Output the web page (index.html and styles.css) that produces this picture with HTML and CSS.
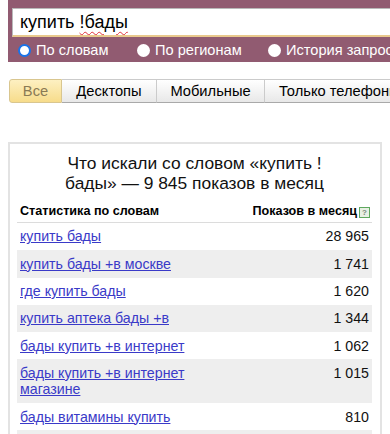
FILE: index.html
```html
<!DOCTYPE html>
<html lang="ru">
<head>
<meta charset="utf-8">
<link rel="stylesheet" href="styles.css">
</head>
<body>
<div class="search">
  <div class="input"><span class="query">купить <span class="typo">!бады</span></span></div>
  <div class="radios">
    <label class="radio"><span class="dot checked"></span>По словам</label>
    <label class="radio"><span class="dot"></span>По регионам</label>
    <label class="radio"><span class="dot"></span>История запросов</label>
  </div>
</div>
<div class="tabs">
  <span class="tab active">Все</span>
  <span class="tab">Десктопы</span>
  <span class="tab">Мобильные</span>
  <span class="tab">Только телефоны</span>
</div>
<div class="card">
  <div class="title">Что искали со словом «купить !<br>бады» — 9 845 показов в месяц</div>
  <table class="stats">
    <thead>
      <tr><th class="kw">Статистика по словам</th><th class="num">Показов в месяц<span class="help">?</span></th></tr>
    </thead>
    <tbody>
      <tr><td class="kw"><a href="#">купить бады</a></td><td class="num">28 965</td></tr>
      <tr class="odd"><td class="kw"><a href="#">купить бады +в москве</a></td><td class="num">1 741</td></tr>
      <tr><td class="kw"><a href="#">где купить бады</a></td><td class="num">1 620</td></tr>
      <tr class="odd"><td class="kw"><a href="#">купить аптека бады +в</a></td><td class="num">1 344</td></tr>
      <tr><td class="kw"><a href="#">бады купить +в интернет</a></td><td class="num">1 062</td></tr>
      <tr class="odd"><td class="kw"><a href="#">бады купить +в интернет магазине</a></td><td class="num">1 015</td></tr>
      <tr><td class="kw"><a href="#">бады витамины купить</a></td><td class="num">810</td></tr>
      <tr class="odd"><td class="kw">&nbsp;</td><td class="num">&nbsp;</td></tr>
    </tbody>
  </table>
</div>
</body>
</html>
```
FILE: styles.css
```css
html, body {
  margin: 0;
  padding: 0;
  background: #fff;
  overflow: hidden;
}
body {
  font-family: "Liberation Sans", Arial, sans-serif;
  color: #000;
  width: 390px;
  height: 434px;
}
.search {
  margin-left: 8px;
  height: 62px;
  background: #915b71;
  padding: 8px 0 0 4px;
  box-sizing: border-box;
}
.input {
  height: 29px;
  box-sizing: border-box;
  background: #fff;
  border: 1px solid #b9b9b9;
  border-bottom: 2px solid #e9c98d;
  border-right: none;
  padding-left: 7px;
  font-size: 18px;
  line-height: 27px;
  white-space: nowrap;
  overflow: hidden;
}
.typo {
  text-decoration: underline wavy #e0303a;
  text-decoration-thickness: 1px;
  text-underline-offset: 3px;
}
.radios {
  display: flex;
  margin-top: 5px;
  padding-left: 6px;
  font-size: 14.6px;
  color: #fff;
  white-space: nowrap;
}
.radio {
  display: flex;
  flex-shrink: 0;
  align-items: center;
  gap: 5px;
  height: 16px;
}
.radio:nth-child(1) { width: 119px; }
.radio:nth-child(2) { width: 131px; }
.dot {
  flex-shrink: 0;
  width: 13px;
  height: 13px;
  border-radius: 50%;
  background: #fff;
  box-sizing: border-box;
}
.dot.checked {
  border: 2.5px solid #1a73e8;
  background: #fff;
}
.tabs {
  display: flex;
  margin: 17px 0 0 9px;
  white-space: nowrap;
}
.tab {
  flex-shrink: 0;
  height: 24px;
  box-sizing: border-box;
  padding: 0 15px;
  font-size: 14.7px;
  line-height: 22px;
  color: #000;
  background: linear-gradient(#ffffff, #e8e8e8);
  border: 1px solid #cbcbcb;
  border-left: none;
  border-bottom-color: #a9a9a9;
}
.tab:nth-child(2) { width: 95px; text-align: center; padding: 0; }
.tab:nth-child(3) { width: 108px; text-align: center; padding: 0; }
.tab:nth-child(4) { padding-left: 14px; }
.tab.active {
  width: 53px;
  padding: 0;
  text-align: center;
  color: #8a7a55;
  background: linear-gradient(#fdf0c2, #f7dc8b);
  border: 1px solid #d9c68f;
  border-radius: 3px 0 0 3px;
}
.card {
  margin: 39px 0 0 8px;
  width: 374px;
  height: 292px;
  overflow: hidden;
  box-sizing: border-box;
  border: 2px solid #e3e3e3;
  border-bottom: none;
  padding: 9px 8px 0 7px;
}
.title {
  text-align: center;
  font-size: 17.4px;
  line-height: 20px;
  color: #111;
}
.stats {
  width: 100%;
  border-collapse: collapse;
  margin-top: 7px;
  font-size: 14.2px;
}
.stats th {
  font-size: 12.6px;
  font-weight: bold;
  padding: 3px 3px 3px;
  line-height: 16px;
  border-bottom: 1px solid #dcdcdc;
  white-space: nowrap;
}
.stats th.kw { text-align: left; }
.stats th.num { text-align: right; padding-right: 2px; }
.help {
  display: inline-block;
  width: 9px;
  height: 9px;
  margin-left: 2px;
  border: 1px solid #5fa85f;
  background: #e8f0e4;
  color: #7a8a7a;
  font-size: 8px;
  line-height: 9px;
  text-align: center;
  vertical-align: 0;
}
.stats td {
  padding: 5.4px 3px;
  line-height: 16.5px;
  vertical-align: top;
}
.stats tr.odd td { background: #eeeeee; }
.stats td.kw { width: 200px; }
.stats td.num { text-align: right; color: #111; }
.stats a {
  color: #3a3ac8;
  text-decoration: underline;
}
```
